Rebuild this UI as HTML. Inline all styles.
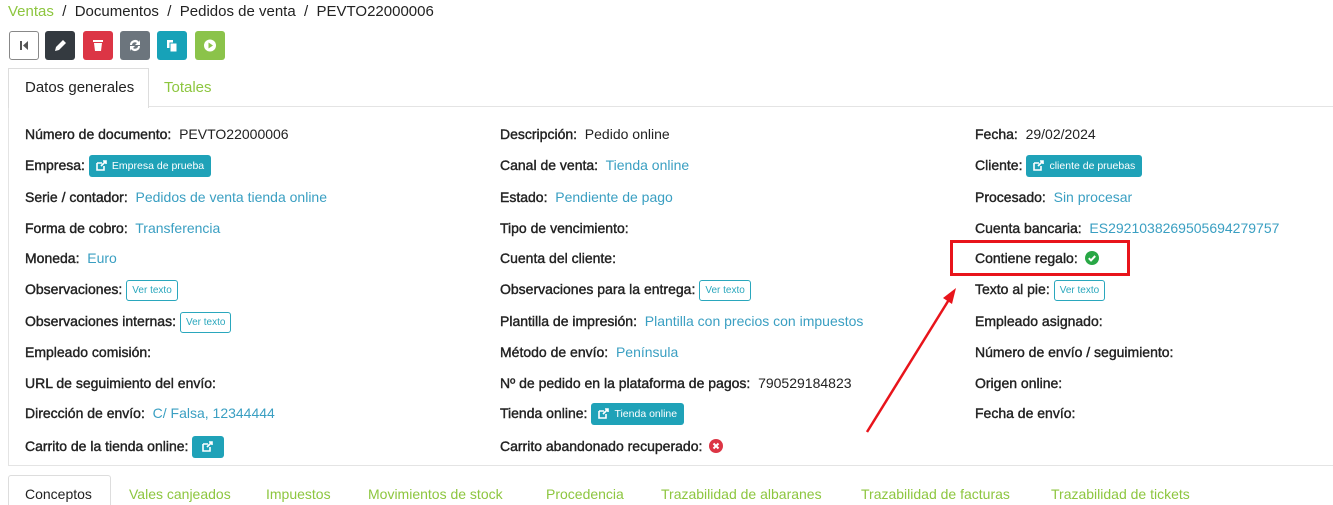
<!DOCTYPE html>
<html><head><meta charset="utf-8"><style>
*{margin:0;padding:0;box-sizing:border-box}
body{width:1333px;height:497px;overflow:hidden;background:#fff;font-family:"Liberation Sans",sans-serif;font-size:14px;color:#222;position:relative}
.a{position:absolute;white-space:nowrap}
.r{position:absolute;white-space:nowrap;line-height:20px}
.l{color:#222;-webkit-text-stroke:0.4px #222}
.v{color:#3a9fc2}
.btn{display:inline-block;background:#1fa2b8;color:#fff;font-size:10.5px;border-radius:3px;padding:0 7px;height:22px;line-height:22px;vertical-align:middle;margin-left:4px}
.btn svg{vertical-align:-2px;margin-right:5px}
.vt{display:inline-block;border:1px solid #2aa7bd;color:#2aa7bd;font-size:10px;border-radius:3px;padding:0 5px;height:21px;line-height:19px;vertical-align:middle;margin-left:4px}
.tb{position:absolute;top:31px;width:30px;height:29px;border-radius:3px}
.g{color:#8dc63f}
</style></head><body>
<div class="a" style="left:8px;top:3px;font-size:15px"><span class="g">Ventas</span> &nbsp;/&nbsp; Documentos &nbsp;/&nbsp; Pedidos de venta &nbsp;/&nbsp; PEVTO22000006</div>

<div class="tb" style="left:9px;border:1px solid #888;background:#fff"><svg width="28" height="27"><rect x="10" y="9" width="2" height="9" fill="#555"/><path d="M18 9v9l-5-4.5z" fill="#555"/></svg></div>
<div class="tb" style="left:45px;background:#343a40"><svg width="30" height="29"><path d="M10 20l1-4 7-7 3 3-7 7z" fill="#fff"/></svg></div>
<div class="tb" style="left:83px;background:#dc3545"><svg width="30" height="29"><rect x="10" y="9" width="10" height="2" fill="#fff"/><path d="M11 12h8l-1 8h-6z" fill="#fff"/></svg></div>
<div class="tb" style="left:120px;background:#6c757d"><svg width="30" height="29"><path d="M10 14a5 5 0 0 1 9-3l1-2v5h-5l2-2a3 3 0 0 0-5 2zM20 15a5 5 0 0 1-9 3l-1 2v-5h5l-2 2a3 3 0 0 0 5-2z" fill="#fff"/></svg></div>
<div class="tb" style="left:157px;background:#17a2b8"><svg width="30" height="29"><rect x="10" y="9" width="6" height="8" fill="#fff"/><rect x="13" y="12" width="7" height="9" fill="#fff" stroke="#17a2b8"/></svg></div>
<div class="tb" style="left:195px;background:#8bc34a"><svg width="30" height="29"><circle cx="15" cy="14.5" r="6" fill="#fff"/><path d="M13.5 11.5v6l4.5-3z" fill="#8bc34a"/></svg></div>

<div class="a" style="left:8px;top:68px;width:141px;height:40px;border:1px solid #ddd;border-bottom:none;background:#fff;z-index:2"></div>
<div class="a" style="left:8px;top:106px;width:1325px;height:360px;border:1px solid #e4e4e4;border-right:none"></div>
<div class="a" style="left:25px;top:79px;font-size:15px;z-index:3">Datos generales</div>
<div class="a g" style="left:164px;top:79px;font-size:15px">Totales</div>

<div class="r" style="left:25px;top:124px"><span class="l">Número de documento:</span>&nbsp; PEVTO22000006</div>
<div class="r" style="left:25px;top:155px"><span class="l">Empresa:</span><span class="btn"><svg width="11" height="11"><path d="M1 3h5M1 3v7h7V6" stroke="#fff" stroke-width="1.6" fill="none"/><path d="M5 6l5-5M7 1h3v3" stroke="#fff" stroke-width="1.6" fill="none"/></svg>Empresa de prueba</span></div>
<div class="r" style="left:25px;top:187px"><span class="l">Serie / contador:</span>&nbsp; <span class="v">Pedidos de venta tienda online</span></div>
<div class="r" style="left:25px;top:218px"><span class="l">Forma de cobro:</span>&nbsp; <span class="v">Transferencia</span></div>
<div class="r" style="left:25px;top:248px"><span class="l">Moneda:</span>&nbsp; <span class="v">Euro</span></div>
<div class="r" style="left:25px;top:279px"><span class="l">Observaciones:</span><span class="vt">Ver texto</span></div>
<div class="r" style="left:25px;top:311px"><span class="l">Observaciones internas:</span><span class="vt">Ver texto</span></div>
<div class="r" style="left:25px;top:342px"><span class="l">Empleado comisión:</span></div>
<div class="r" style="left:25px;top:373px"><span class="l">URL de seguimiento del envío:</span></div>
<div class="r" style="left:25px;top:403px"><span class="l">Dirección de envío:</span>&nbsp; <span class="v">C/ Falsa, 12344444</span></div>
<div class="r" style="left:25px;top:436px"><span class="l">Carrito de la tienda online:</span><span class="btn" style="padding:0 6px 0 10px"><svg width="11" height="11"><path d="M1 3h5M1 3v7h7V6" stroke="#fff" stroke-width="1.6" fill="none"/><path d="M5 6l5-5M7 1h3v3" stroke="#fff" stroke-width="1.6" fill="none"/></svg></span></div>

<div class="r" style="left:500px;top:124px"><span class="l">Descripción:</span>&nbsp; Pedido online</div>
<div class="r" style="left:500px;top:155px"><span class="l">Canal de venta:</span>&nbsp; <span class="v">Tienda online</span></div>
<div class="r" style="left:500px;top:187px"><span class="l">Estado:</span>&nbsp; <span class="v">Pendiente de pago</span></div>
<div class="r" style="left:500px;top:218px"><span class="l">Tipo de vencimiento:</span></div>
<div class="r" style="left:500px;top:248px"><span class="l">Cuenta del cliente:</span></div>
<div class="r" style="left:500px;top:279px"><span class="l">Observaciones para la entrega:</span><span class="vt">Ver texto</span></div>
<div class="r" style="left:500px;top:311px"><span class="l">Plantilla de impresión:</span>&nbsp; <span class="v">Plantilla con precios con impuestos</span></div>
<div class="r" style="left:500px;top:342px"><span class="l">Método de envío:</span>&nbsp; <span class="v">Península</span></div>
<div class="r" style="left:500px;top:373px"><span class="l">Nº de pedido en la plataforma de pagos:</span>&nbsp; 790529184823</div>
<div class="r" style="left:500px;top:403px"><span class="l">Tienda online:</span><span class="btn"><svg width="11" height="11"><path d="M1 3h5M1 3v7h7V6" stroke="#fff" stroke-width="1.6" fill="none"/><path d="M5 6l5-5M7 1h3v3" stroke="#fff" stroke-width="1.6" fill="none"/></svg>Tienda online</span></div>
<div class="r" style="left:500px;top:436px"><span class="l">Carrito abandonado recuperado:</span> <svg width="14" height="14" style="vertical-align:-2px;margin-left:3px"><circle cx="7" cy="7" r="7" fill="#dc3545"/><path d="M4.5 4.5l5 5M9.5 4.5l-5 5" stroke="#fff" stroke-width="2"/></svg></div>

<div class="r" style="left:975px;top:124px"><span class="l">Fecha:</span>&nbsp; 29/02/2024</div>
<div class="r" style="left:975px;top:155px"><span class="l">Cliente:</span><span class="btn"><svg width="11" height="11"><path d="M1 3h5M1 3v7h7V6" stroke="#fff" stroke-width="1.6" fill="none"/><path d="M5 6l5-5M7 1h3v3" stroke="#fff" stroke-width="1.6" fill="none"/></svg>cliente de pruebas</span></div>
<div class="r" style="left:975px;top:187px"><span class="l">Procesado:</span>&nbsp; <span class="v">Sin procesar</span></div>
<div class="r" style="left:975px;top:218px"><span class="l">Cuenta bancaria:</span>&nbsp; <span class="v">ES2921038269505694279757</span></div>
<div class="r" style="left:975px;top:248px"><span class="l">Contiene regalo:</span> <svg width="14" height="14" style="vertical-align:-2px;margin-left:3px"><circle cx="7" cy="7" r="7" fill="#28a745"/><path d="M3.8 7.2l2.2 2.2 4.2-4.4" stroke="#fff" stroke-width="2" fill="none"/></svg></div>
<div class="r" style="left:975px;top:279px"><span class="l">Texto al pie:</span><span class="vt">Ver texto</span></div>
<div class="r" style="left:975px;top:311px"><span class="l">Empleado asignado:</span></div>
<div class="r" style="left:975px;top:342px"><span class="l">Número de envío / seguimiento:</span></div>
<div class="r" style="left:975px;top:373px"><span class="l">Origen online:</span></div>
<div class="r" style="left:975px;top:403px"><span class="l">Fecha de envío:</span></div>

<div class="a" style="left:950px;top:240px;width:180px;height:36px;border:3px solid #e8141b"></div>
<svg class="a" style="left:860px;top:280px" width="110" height="160"><path d="M7 152L90 18" stroke="#e8141b" stroke-width="2.5"/><path d="M96 8l-13 10 9 6z" fill="#e8141b"/></svg>

<div class="a" style="left:8px;top:475px;width:103px;height:30px;border:1px solid #ddd;border-bottom:none;border-radius:3px 3px 0 0"></div>
<div class="a" style="left:25px;top:486px;font-size:14px">Conceptos</div>
<div class="a g" style="left:129px;top:486px;font-size:14px">Vales canjeados</div>
<div class="a g" style="left:266px;top:486px;font-size:14px">Impuestos</div>
<div class="a g" style="left:368px;top:486px;font-size:14px">Movimientos de stock</div>
<div class="a g" style="left:546px;top:486px;font-size:14px">Procedencia</div>
<div class="a g" style="left:661px;top:486px;font-size:14px">Trazabilidad de albaranes</div>
<div class="a g" style="left:861px;top:486px;font-size:14px">Trazabilidad de facturas</div>
<div class="a g" style="left:1051px;top:486px;font-size:14px">Trazabilidad de tickets</div>
</body></html>
